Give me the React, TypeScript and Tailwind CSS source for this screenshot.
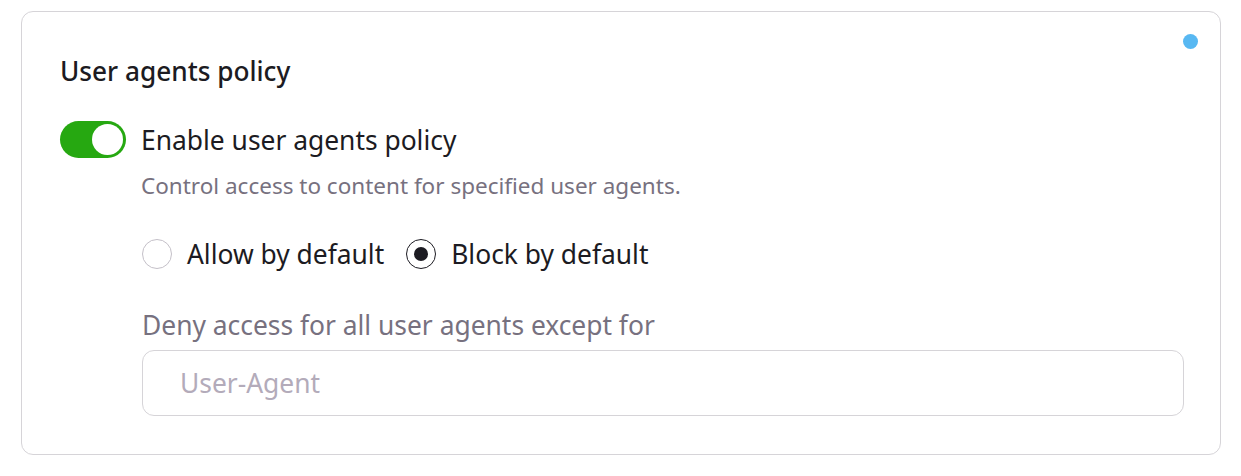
import { useState } from 'react'

function Toggle({ on, onChange }: { on: boolean; onChange: (v: boolean) => void }) {
  return (
    <button
      type="button"
      onClick={() => onChange(!on)}
      className={`relative h-[37px] w-[66px] shrink-0 rounded-full transition-colors ${on ? 'bg-[#26a811]' : 'bg-[#cfcbd3]'}`}
    >
      <span
        className={`absolute top-[3px] h-[31px] w-[31px] rounded-full bg-white transition-all ${on ? 'left-[32px]' : 'left-[3px]'}`}
      />
    </button>
  )
}

function Radio({ checked, label, onSelect }: { checked: boolean; label: string; onSelect: () => void }) {
  return (
    <label className="flex cursor-pointer items-center gap-[15px]" onClick={onSelect}>
      <span
        className={`flex h-[30px] w-[30px] items-center justify-center rounded-full bg-white ${checked ? 'border-[1.5px] border-[#1c1b22]' : 'border border-[#c4c0c8]'}`}
      >
        {checked && <span className="h-[14px] w-[14px] rounded-full bg-[#1c1b22]" />}
      </span>
      <span className="text-[26.4px] leading-[34px] text-[#1c1b22]">{label}</span>
    </label>
  )
}

export default function App() {
  const [enabled, setEnabled] = useState(true)
  const [mode, setMode] = useState<'allow' | 'block'>('block')

  return (
    <div className="min-h-[476px] bg-white pl-[21px] pt-[11px] font-['Noto_Sans',sans-serif]">
      <div className="relative w-[1200px] rounded-[12px] border border-[#d6d4d8] pb-[38px] pl-[38px] pr-[36px] pt-[42px]">
        <span className="absolute right-[22px] top-[22px] h-[15px] w-[15px] rounded-full bg-[#58b8f2]" />

        <h2 className="text-[26.2px] font-medium leading-[34px] text-[#1c1b22]">User agents policy</h2>

        {/* Toggle */}
        <div className="mt-[33px] flex items-center gap-[15px]">
          <Toggle on={enabled} onChange={setEnabled} />
          <span className="text-[26.4px] leading-[34px] text-[#1c1b22]">Enable user agents policy</span>
        </div>

        <div className="ml-[82px]">
          <p className="-ml-px mt-[14px] text-[22.5px] leading-[28px] text-[#77717f]">
            Control access to content for specified user agents.
          </p>

          {/* Default mode */}
          <div className="mt-[37px] flex items-center gap-[22px]">
            <Radio checked={mode === 'allow'} label="Allow by default" onSelect={() => setMode('allow')} />
            <Radio checked={mode === 'block'} label="Block by default" onSelect={() => setMode('block')} />
          </div>

          <p className="mt-[37px] text-[26.4px] leading-[34px] text-[#77717f]">
            {mode === 'block' ? 'Deny access for all user agents except for' : 'Allow access for all user agents except for'}
          </p>

          <input
            type="text"
            placeholder="User-Agent"
            className="mt-[8px] h-[66px] w-full rounded-[12px] border border-[#d6d4d8] px-[37px] text-[26.4px] text-[#1c1b22] outline-none placeholder:text-[#b3abba]"
          />
        </div>
      </div>
    </div>
  )
}
